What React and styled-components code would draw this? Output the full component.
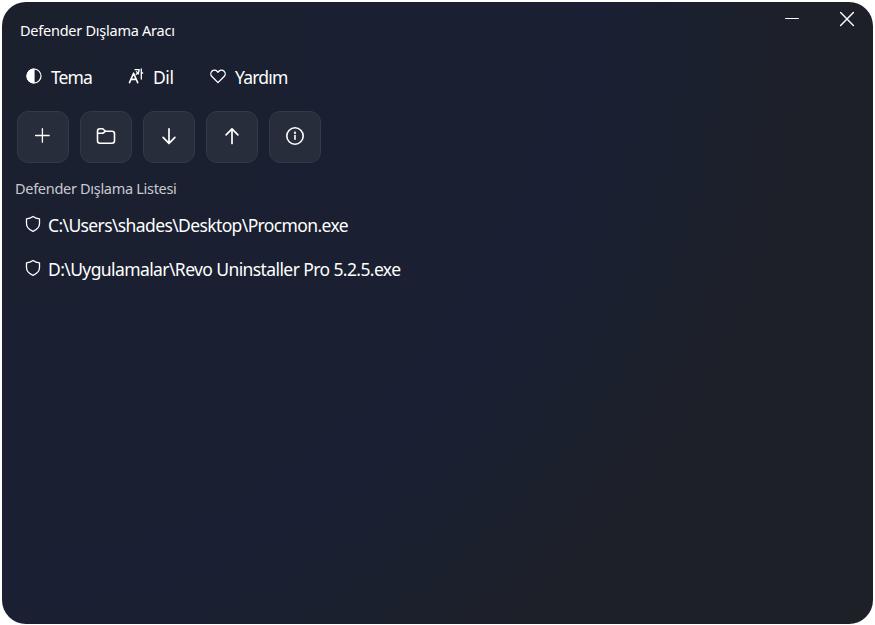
import React from 'react';
import styled, { createGlobalStyle } from 'styled-components';

const GlobalStyle = createGlobalStyle`
  * { box-sizing: border-box; }
  body { margin: 0; background: #fff; font-family: "Noto Sans", "Open Sans", sans-serif; color: #fff; }
  button { font: inherit; color: inherit; background: none; border: 0; padding: 0; }
`;

const Page = styled.div`
  width: 875px;
  height: 625px;
  padding: 2px 2px 1px;
  overflow: hidden;
`;

const Window = styled.main`
  width: 871px;
  height: 622px;
  border-radius: 24px;
  overflow: hidden;
  background: radial-gradient(circle at 0 0, #1c202b 0, #1b202f 70px, #1a2031 350px, #1a1f33 600px, #1b202e 710px, #1d2029 800px, #1e2027 930px);
`;

const TitleBar = styled.header`
  display: flex;
  justify-content: space-between;
  height: 57px;
  padding-left: 18px;
`;

const Title = styled.h1`
  margin: 17px 0 0;
  font-size: 14.5px;
  font-weight: 400;
  line-height: 22px;
  letter-spacing: -0.25px;
  white-space: nowrap;
`;

const WindowControls = styled.div`
  display: flex;
  height: 34px;
  margin-right: -1px;
`;

const WindowButton = styled.button`
  display: grid;
  place-items: center;
  width: 55px;
  height: 34px;
`;

const Menu = styled.nav`
  display: flex;
  height: 36px;
  padding-left: 24px;
`;

const MenuItem = styled.button`
  display: flex;
  align-items: center;
  gap: ${(p) => p.$gap}px;
  width: ${(p) => p.$width}px;
  height: 36px;
  font-size: 17.5px;
  letter-spacing: ${(p) => p.$spacing}px;
  white-space: nowrap;

  svg { flex: none; margin-bottom: 2px; }
`;

const Toolbar = styled.div`
  display: flex;
  gap: 11px;
  padding: 16px 0 0 15px;
`;

const ToolButton = styled.button`
  display: grid;
  place-items: center;
  width: 52px;
  height: 52px;
  border: 1px solid #343946;
  border-radius: 11px;
  background: #282d3b;
`;

const ListTitle = styled.h2`
  margin: 14px 0 0 13px;
  font-size: 14.5px;
  font-weight: 400;
  line-height: 22px;
  letter-spacing: -0.3px;
  color: #c9cad0;
`;

const List = styled.ul`
  margin: 4px 0 0;
  padding: 0;
  list-style: none;
`;

const Entry = styled.li`
  display: flex;
  align-items: center;
  gap: 7px;
  height: 44px;
  padding-left: 23px;
  font-size: 17.5px;
  letter-spacing: ${(p) => p.$spacing}px;
  white-space: nowrap;

  svg { flex: none; margin-bottom: 3px; }
`;

const Icon = ({ width = 20, height = 20, stroke = 1.6, children }) => (
  <svg width={width} height={height} viewBox={`0 0 ${width} ${height}`} fill="none"
    stroke="#fff" strokeWidth={stroke} strokeLinecap="round" strokeLinejoin="round">
    {children}
  </svg>
);

const ThemeIcon = () => (
  <Icon width={16} height={16} stroke={1.2}>
    <circle cx="8" cy="8" r="7" />
    <path d="M8 1a7 7 0 0 0 0 14z" fill="#fff" />
  </Icon>
);

const LanguageIcon = () => (
  <Icon width={16} height={16} stroke={1.2}>
    <path d="M1.5 14.6 5.6 5.2l4.1 9.4M3 11.4h5.2" strokeWidth="1.6" />
    <path d="M7 1.6h4.2c0 2.6-1.2 4.1-3 4.8M8.4 3.6l2.2 2.2M13.3 1v10M13.3 5h1.4" strokeWidth="1.3" />
  </Icon>
);

const HeartIcon = () => (
  <Icon width={16} height={16} stroke={1.3}>
    <path d="M8 14.6 1.9 8.5a3.7 3.7 0 0 1 0-5.2 3.7 3.7 0 0 1 5.2 0L8 4.2l.9-.9a3.7 3.7 0 0 1 5.2 0 3.7 3.7 0 0 1 0 5.2z" />
  </Icon>
);

const ShieldIcon = () => (
  <Icon width={16} height={18} stroke={1.3}>
    <path d="M8 1.5c2 1.4 4 2.1 6.5 2.3v4.8c0 3.7-2.2 6.1-6.5 7.8-4.3-1.7-6.5-4.1-6.5-7.8V3.8C4 3.6 6 2.9 8 1.5z" />
  </Icon>
);

const tools = [
  { label: 'Ekle', icon: <Icon stroke={1.3}><path d="M9.4 1.7v13.6M2.6 8.5h13.6" /></Icon> },
  { label: 'Klasör', icon: <Icon><path d="M1.5 6.2V4.2A2.4 2.4 0 0 1 3.9 1.8h2.2c.7 0 1.2.3 1.6.7L9.6 4.3H16a2.5 2.5 0 0 1 2.5 2.5v6.9a2.5 2.5 0 0 1-2.5 2.5H4a2.5 2.5 0 0 1-2.5-2.5zM1.5 6.2h4.7c.6 0 1.1-.2 1.5-.6l1.6-1.3" /></Icon> },
  { label: 'İndir', icon: <Icon stroke={1.7}><path d="M10 1.8v14.6M4.1 10.4l5.9 6 5.9-6" /></Icon> },
  { label: 'Yükle', icon: <Icon stroke={1.7}><path d="M10 16.4V1.8M4.1 7.8l5.9-6 5.9 6" /></Icon> },
  { label: 'Bilgi', icon: <Icon><circle cx="10" cy="9" r="8.2" /><path d="M10 8.5v3.8" /><circle cx="10" cy="5.7" r=".4" fill="#fff" /></Icon> },
];

const entries = [
  { path: 'C:\\Users\\shades\\Desktop\\Procmon.exe', spacing: -0.62 },
  { path: 'D:\\Uygulamalar\\Revo Uninstaller Pro 5.2.5.exe', spacing: -0.6 },
];

export default function App() {
  return (
    <Page>
      <GlobalStyle />
      <Window>
        <TitleBar>
          <Title>Defender Dışlama Aracı</Title>
          <WindowControls>
            <WindowButton aria-label="Küçült"><Icon><path d="M3.5 9.5h13" strokeWidth="1" /></Icon></WindowButton>
            <WindowButton aria-label="Kapat"><Icon stroke={1.4}><path d="m3.6 3.6 12.8 12.8M16.4 3.6 3.6 16.4" /></Icon></WindowButton>
          </WindowControls>
        </TitleBar>
        <Menu>
          <MenuItem $width={102} $gap={9} $spacing={-0.9}><ThemeIcon />Tema</MenuItem>
          <MenuItem $width={82} $gap={9} $spacing={-0.4}><LanguageIcon />Dil</MenuItem>
          <MenuItem $width={90} $gap={9} $spacing={-0.8}><HeartIcon />Yardım</MenuItem>
        </Menu>
        <Toolbar>
          {tools.map((t) => <ToolButton key={t.label} aria-label={t.label}>{t.icon}</ToolButton>)}
        </Toolbar>
        <ListTitle>Defender Dışlama Listesi</ListTitle>
        <List>
          {entries.map((e) => <Entry key={e.path} $spacing={e.spacing}><ShieldIcon />{e.path}</Entry>)}
        </List>
      </Window>
    </Page>
  );
}
